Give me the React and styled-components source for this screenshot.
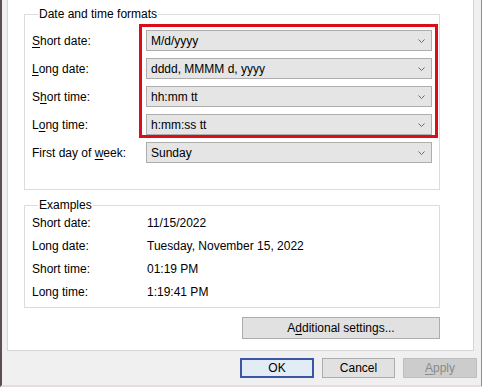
import React from 'react';
import styled, { createGlobalStyle } from 'styled-components';

const GlobalStyle = createGlobalStyle`
  html, body {
    margin: 0;
    padding: 0;
    background: #f0f0f0;
  }
  body {
    font-family: "Liberation Sans", Arial, sans-serif;
    font-size: 12px;
    color: #000;
  }
`;

const Frame = styled.div`
  box-sizing: border-box;
  width: 482px;
  height: 387px;
  display: flex;
  flex-direction: column;
  background: #f0f0f0;
  border-left: 2px solid #5b4f50;
  border-right: 1px solid #8d8d8d;
  border-bottom: 2px solid #ead9de;
  padding-left: 5px;
  padding-right: 4px;
`;

const Panel = styled.div`
  position: relative;
  box-sizing: border-box;
  width: 467px;
  height: 351px;
  background: #fff;
  border: 1px solid #d6d6d6;
  border-top: none;
  display: flex;
  flex-direction: column;
`;

const Group = styled.fieldset`
  box-sizing: border-box;
  width: 416px;
  margin: ${p => (p.$first ? '6px' : '7px')} 0 0 16px;
  padding: ${p => p.$pad};
  border: 1px solid #dcdcdc;
  min-width: 0;
`;

const Legend = styled.legend`
  margin-left: 6px;
  padding: 0 1px;
  line-height: 16px;
  font-size: 12px;
`;

const FormGrid = styled.div`
  display: grid;
  grid-template-columns: 114px 286px;
  grid-auto-rows: 21px;
  row-gap: 7px;
  align-items: center;
`;

const ExampleGrid = styled.div`
  display: grid;
  grid-template-columns: 115px 1fr;
  grid-auto-rows: 16px;
  row-gap: 7px;
  align-items: center;
  line-height: 16px;
`;

const Label = styled.span`
  white-space: nowrap;
`;

const Key = styled.span`
  text-decoration: underline;
  text-underline-offset: 2px;
`;

const Select = styled.div`
  box-sizing: border-box;
  height: 21px;
  display: flex;
  align-items: center;
  justify-content: space-between;
  padding: 0 6px 0 4px;
  background: #e5e5e5;
  border: 1px solid #adadad;
`;

const Highlight = styled.div`
  position: absolute;
  left: 131px;
  top: 24px;
  width: 299px;
  height: 114px;
  box-sizing: border-box;
  border: 3px solid #dc0d1a;
  pointer-events: none;
`;

const WideButton = styled.button`
  box-sizing: border-box;
  align-self: flex-end;
  width: 198px;
  height: 22px;
  margin: 9px 33px 0 0;
  font: inherit;
  color: #000;
  background: #e1e1e1;
  border: 1px solid #adadad;
  padding: 0;
`;

const Footer = styled.div`
  display: flex;
  justify-content: flex-end;
  gap: 8px;
  margin-top: 7px;
`;

const DialogButton = styled.button`
  box-sizing: border-box;
  width: ${p => p.$w}px;
  height: 20px;
  padding: 0;
  font: inherit;
  color: ${p => (p.$disabled ? '#8a8a8a' : '#000')};
  background: ${p => (p.$primary ? '#e3ebf5' : p.$disabled ? '#cccccc' : '#e1e1e1')};
  border: ${p => (p.$primary ? '2px solid #3a56a8' : p.$disabled ? '1px solid #bfbfbf' : '1px solid #adadad')};
`;

const Chevron = () => (
  <svg width="7" height="4" viewBox="0 0 7 4">
    <path d="M0.5 0.5 L3.5 3.5 L6.5 0.5" fill="none" stroke="#6a6a6a" strokeWidth="1" />
  </svg>
);

const formats = [
  { label: <>
    <Key>S</Key>hort date:
  </>, value: 'M/d/yyyy' },
  { label: <>
    <Key>L</Key>ong date:
  </>, value: 'dddd, MMMM d, yyyy' },
  { label: <>
    S<Key>h</Key>ort time:
  </>, value: 'hh:mm tt' },
  { label: <>
    L<Key>o</Key>ng time:
  </>, value: 'h:mm:ss tt' },
  { label: <>
    First day of <Key>w</Key>eek:
  </>, value: 'Sunday' },
];

const examples = [
  ['Short date:', '11/15/2022'],
  ['Long date:', 'Tuesday, November 15, 2022'],
  ['Short time:', '01:19 PM'],
  ['Long time:', '1:19:41 PM'],
];

export default function App() {
  return (
    <>
      <GlobalStyle />
      <Frame>
        <Panel>
          <Group $first $pad="8px 7px 26px 7px">
            <Legend>Date and time formats</Legend>
            <FormGrid>
              {formats.map((f, i) => (
                <React.Fragment key={i}>
                  <Label>{f.label}</Label>
                  <Select>
                    <span>{f.value}</span>
                    <Chevron />
                  </Select>
                </React.Fragment>
              ))}
            </FormGrid>
          </Group>
          <Highlight />
          <Group $pad="2px 7px 7px 7px">
            <Legend>Examples</Legend>
            <ExampleGrid>
              {examples.map(([k, v]) => (
                <React.Fragment key={k}>
                  <Label>{k}</Label>
                  <span>{v}</span>
                </React.Fragment>
              ))}
            </ExampleGrid>
          </Group>
          <WideButton>
            A<Key>d</Key>ditional settings...
          </WideButton>
        </Panel>
        <Footer>
          <DialogButton $w={74} $primary>OK</DialogButton>
          <DialogButton $w={73}>Cancel</DialogButton>
          <DialogButton $w={74} $disabled>
            <Key>A</Key>pply
          </DialogButton>
        </Footer>
      </Frame>
    </>
  );
}
